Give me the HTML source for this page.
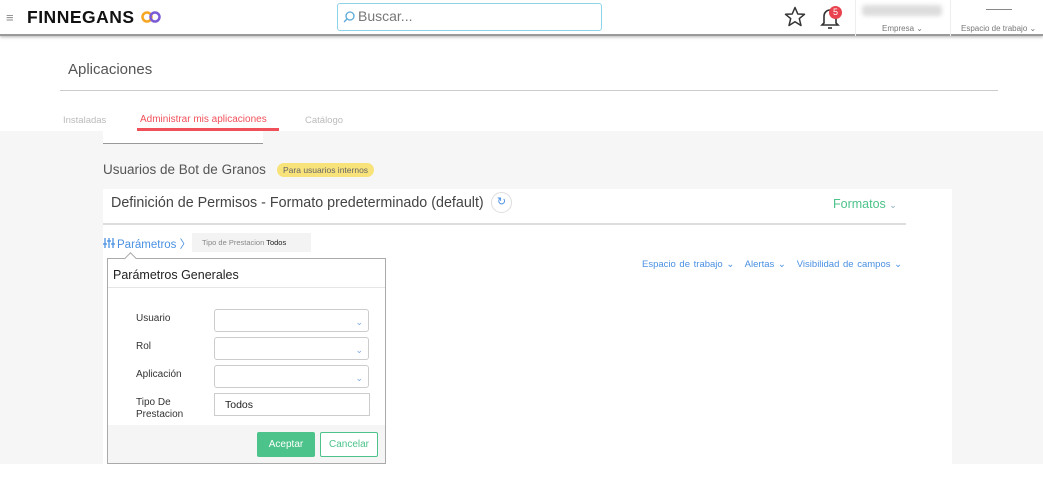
<!DOCTYPE html>
<html><head><meta charset="utf-8"><style>
*{box-sizing:border-box;margin:0;padding:0}
body{width:1043px;height:496px;position:relative;overflow:hidden;background:#fff;font-family:"Liberation Sans",sans-serif;color:#444}
.a{position:absolute}
</style></head><body>
<div class="a" style="left:0;top:0;width:1043px;height:36px;background:#fff;border-bottom:2px solid #9a9a9a;box-shadow:0 1px 3px rgba(0,0,0,.3)"></div>
<div class="a" style="left:6px;top:10px;font-size:13px;color:#888">≡</div>
<div class="a" style="left:27px;top:7px;font-size:17.5px;font-weight:bold;color:#111;letter-spacing:0.5px">FINNEGANS</div>
<svg class="a" style="left:140px;top:10px" width="24" height="14"><circle cx="7" cy="7" r="4.5" fill="none" stroke="#f5a623" stroke-width="2.5"/><circle cx="15" cy="7" r="4.5" fill="none" stroke="#7b5cd6" stroke-width="2.5"/></svg>
<div class="a" style="left:337px;top:3px;width:265px;height:28px;border:1px solid #8fd3e8;border-radius:3px"></div>
<svg class="a" style="left:343px;top:11px" width="12" height="12"><circle cx="7" cy="5" r="4" fill="none" stroke="#5aa9d6" stroke-width="1.3"/><line x1="4" y1="8" x2="1" y2="11" stroke="#5aa9d6" stroke-width="1.3"/></svg>
<div class="a" style="left:358px;top:8px;font-size:14px;color:#777">Buscar...</div>
<svg class="a" style="left:784px;top:6px" width="22" height="21"><polygon points="11,1.5 13.8,8 20.5,8.3 15.3,12.6 17,19.5 11,15.7 5,19.5 6.7,12.6 1.5,8.3 8.2,8" fill="none" stroke="#333" stroke-width="1.5" stroke-linejoin="round"/></svg>
<svg class="a" style="left:820px;top:7px" width="20" height="22"><path d="M4 16 L4 9 A6 6 0 0 1 16 9 L16 16 L18 18 L2 18 Z" fill="none" stroke="#333" stroke-width="1.6"/><line x1="8" y1="21" x2="12" y2="21" stroke="#333" stroke-width="1.6"/></svg>
<div class="a" style="left:829px;top:6px;width:13px;height:13px;border-radius:50%;background:#e8434e;color:#fff;font-size:9px;text-align:center;line-height:13px">5</div>
<div class="a" style="left:855px;top:0;width:1px;height:36px;background:#eee"></div>
<div class="a" style="left:950px;top:0;width:1px;height:36px;background:#eee"></div>
<div class="a" style="left:862px;top:5px;width:80px;height:11px;background:#ddd;filter:blur(2px);border-radius:3px"></div>
<div class="a" style="left:882px;top:24px;font-size:8px;color:#777">Empresa ⌄</div>
<div class="a" style="left:986px;top:9px;width:26px;height:1px;background:#888"></div>
<div class="a" style="left:961px;top:24px;font-size:8px;color:#777">Espacio de trabajo ⌄</div>
<div class="a" style="left:68px;top:61px;font-size:15px;color:#555">Aplicaciones</div>
<div class="a" style="left:60px;top:90px;width:938px;height:1px;background:#ccc"></div>
<div class="a" style="left:0;top:131px;width:1043px;height:333px;background:#f6f6f6"></div>
<div class="a" style="left:63px;top:115px;font-size:9.5px;color:#bbb">Instaladas</div>
<div class="a" style="left:140px;top:114px;font-size:10px;color:#f0505a">Administrar mis aplicaciones</div>
<div class="a" style="left:137px;top:128px;width:142px;height:3px;background:#f0505a"></div>
<div class="a" style="left:305px;top:115px;font-size:9.5px;color:#bbb">Catálogo</div>
<div class="a" style="left:103px;top:131px;width:160px;height:13px;background:#fff;border-bottom:1px solid #999"></div>
<div class="a" style="left:103px;top:162px;font-size:13.5px;color:#555">Usuarios de Bot de Granos</div>
<div class="a" style="left:277px;top:163px;height:14px;padding:0 6px;background:#f8e27a;border-radius:7px;font-size:8.5px;line-height:14px;color:#666">Para usuarios internos</div>
<div class="a" style="left:103px;top:189px;width:849px;height:275px;background:#fff"></div>
<div class="a" style="left:111px;top:195px;font-size:14.3px;color:#444">Definición de Permisos - Formato predeterminado (default)</div>
<div class="a" style="left:491px;top:192px;width:21px;height:21px;border:1px solid #ddd;border-radius:50%;color:#4a90e2;font-size:11px;text-align:center;line-height:19px">↻</div>
<div class="a" style="left:833px;top:197px;font-size:12.5px;color:#4cc38a">Formatos <span style="color:#8ab;font-size:9px">⌄</span></div>
<div class="a" style="left:103px;top:223px;width:803px;height:2px;background:#ddd"></div>
<svg class="a" style="left:103px;top:237px" width="12" height="12"><g stroke="#4a90e2" stroke-width="1.3"><line x1="2" y1="1" x2="2" y2="11"/><line x1="6" y1="1" x2="6" y2="11"/><line x1="10" y1="1" x2="10" y2="11"/><line x1="0" y1="7" x2="4" y2="7"/><line x1="4" y1="4" x2="8" y2="4"/><line x1="8" y1="7" x2="12" y2="7"/></g></svg>
<div class="a" style="left:117px;top:236px;font-size:11.5px;color:#4a90e2">Parámetros 〉</div>
<div class="a" style="left:192px;top:233px;width:119px;height:19px;background:#f3f3f3;font-size:7.5px;line-height:19px;padding-left:10px;color:#888">Tipo de Prestacion <span style="color:#222">Todos</span></div>
<div class="a" style="left:642px;top:259px;font-size:9.5px;color:#4a90e2;word-spacing:1px">Espacio de trabajo ⌄ &nbsp; Alertas ⌄ &nbsp; Visibilidad de campos ⌄</div>
<div class="a" style="left:107px;top:258px;width:279px;height:206px;background:#fff;border:1px solid #aaa"></div>
<div class="a" style="left:126px;top:254px;width:9px;height:9px;background:#fff;border-left:1px solid #aaa;border-top:1px solid #aaa;transform:rotate(45deg)"></div>
<div class="a" style="left:113px;top:268px;font-size:12.5px;color:#222">Parámetros Generales</div>
<div class="a" style="left:108px;top:287px;width:277px;height:1px;background:#e5e5e5"></div>
<div class="a" style="left:108px;top:425px;width:277px;height:38px;background:#f5f5f5"></div>
<div class="a" style="left:136px;top:313px;font-size:10px;color:#333">Usuario</div>
<div class="a" style="left:136px;top:341px;font-size:10px;color:#333">Rol</div>
<div class="a" style="left:136px;top:369px;font-size:10px;color:#333">Aplicación</div>
<div class="a" style="left:136px;top:397px;font-size:10px;color:#333;line-height:12px">Tipo De<br>Prestacion</div>
<div class="a" style="left:214px;top:309px;width:155px;height:23px;border:1px solid #ccc;border-radius:3px;text-align:right;padding-right:5px;color:#7aa8e0;font-size:9px;line-height:24px">⌄</div>
<div class="a" style="left:214px;top:337px;width:155px;height:23px;border:1px solid #ccc;border-radius:3px;text-align:right;padding-right:5px;color:#7aa8e0;font-size:9px;line-height:24px">⌄</div>
<div class="a" style="left:214px;top:365px;width:155px;height:23px;border:1px solid #ccc;border-radius:3px;text-align:right;padding-right:5px;color:#7aa8e0;font-size:9px;line-height:24px">⌄</div>
<div class="a" style="left:214px;top:393px;width:156px;height:23px;border:1px solid #ccc;font-size:10.5px;line-height:23px;padding-left:10px;color:#222">Todos</div>
<div class="a" style="left:257px;top:432px;width:58px;height:25px;background:#4cc38a;border-radius:2px;color:#fff;font-size:10px;text-align:center;line-height:25px">Aceptar</div>
<div class="a" style="left:320px;top:432px;width:58px;height:25px;border:1px solid #4cc38a;background:#fff;border-radius:2px;color:#4cc38a;font-size:10px;text-align:center;line-height:23px">Cancelar</div>
</body></html>
